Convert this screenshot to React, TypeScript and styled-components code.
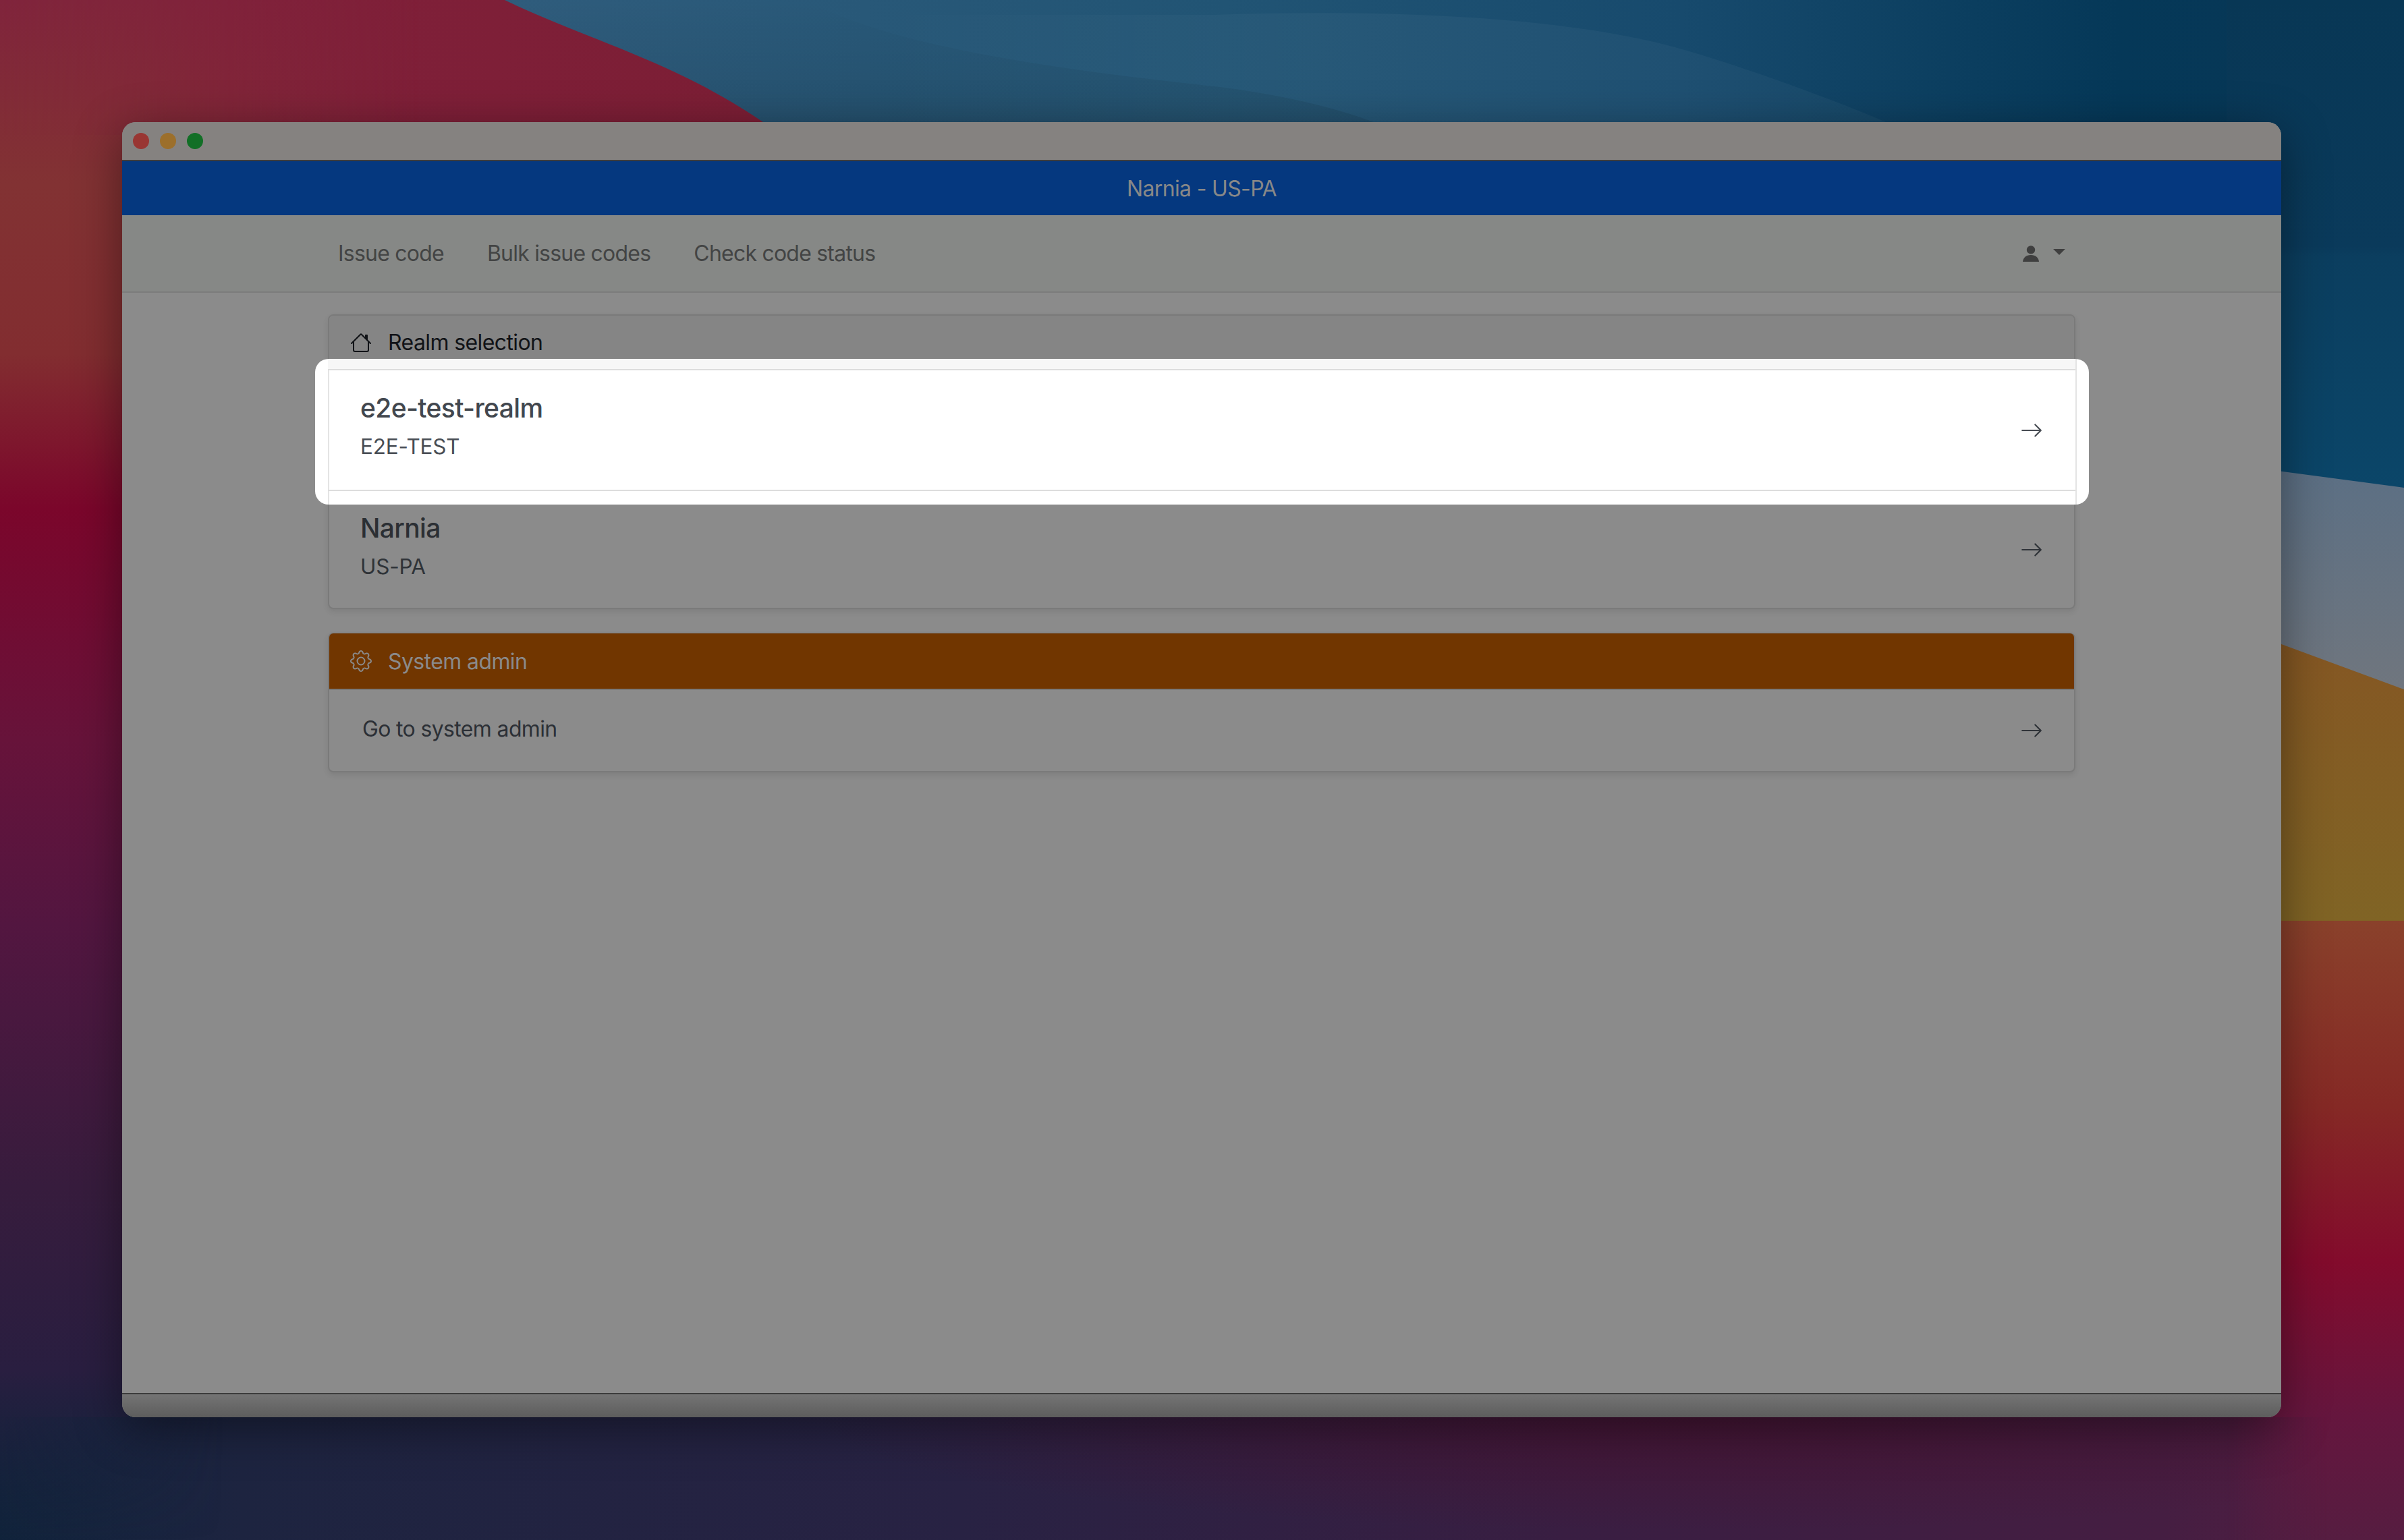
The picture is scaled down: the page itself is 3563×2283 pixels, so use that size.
import React from "react";
import styled, { createGlobalStyle } from "styled-components";
import { BsArrowRight, BsGear, BsHouse } from "react-icons/bs";

const Global = createGlobalStyle`
  html, body { margin: 0; padding: 0; background: #1f1d3a; }
  body { font-family: Inter, "Liberation Sans", sans-serif; }
`;

const Stage = styled.div`
  position: relative;
  width: 3563px;
  height: 2283px;
  overflow: hidden;
  box-sizing: border-box;
  padding: 181px 182px 182px 181px;
`;

const WallpaperSvg = styled.svg`
  position: absolute;
  inset: 0;
`;

const Window = styled.main`
  position: relative;
  height: 100%;
  display: flex;
  flex-direction: column;
  border-radius: 20px;
  overflow: hidden;
  background: #8b8b8b;
  box-shadow: 0 16px 70px rgba(0, 0, 0, 0.42);
`;

const TitleBar = styled.div`
  flex: none;
  height: 56px;
  box-sizing: content-box;
  display: flex;
  align-items: center;
  gap: 16px;
  padding-left: 16px;
  background: #858280;
  border-bottom: 2px solid #3e3d3c;
`;

const Light = styled.span<{ $color: string }>`
  width: 24px;
  height: 24px;
  border-radius: 50%;
  background: ${(p) => p.$color};
`;

const Banner = styled.header`
  flex: none;
  height: 80px;
  display: flex;
  align-items: center;
  justify-content: center;
  background: #05387f;
  color: #888888;
  font-size: 32px;
  letter-spacing: -0.65px;
`;

const NavBar = styled.nav`
  flex: none;
  height: 113px;
  box-sizing: content-box;
  display: flex;
  justify-content: center;
  background: #868886;
  border-bottom: 2px solid #7c7c7c;
`;

const NavInner = styled.div`
  width: 2590px;
  box-sizing: border-box;
  padding: 0 15px;
  display: flex;
  align-items: center;
  gap: 64px;
`;

const NavLink = styled.span`
  font-size: 32px;
  color: #434444;
  letter-spacing: -0.78px;
`;

const UserMenu = styled.div`
  margin-left: auto;
  display: flex;
  align-items: center;
  gap: 21px;
  color: #3f3f3f;
`;

const Caret = styled.span`
  width: 0;
  height: 0;
  margin-bottom: 4px;
  border-top: 9px solid #3f3f3f;
  border-left: 9px solid transparent;
  border-right: 9px solid transparent;
`;

const Content = styled.div`
  flex: 1;
  width: 2590px;
  align-self: center;
  padding-top: 32px;
  display: flex;
  flex-direction: column;
  gap: 35px;
`;

const Card = styled.section`
  position: relative;
  box-sizing: border-box;
  border: 2px solid #7a7a7a;
  border-radius: 8px;
  box-shadow: 0 4px 8px rgba(0, 0, 0, 0.09);
`;

const CardHeader = styled.div<{ $accent?: boolean }>`
  height: ${(p) => (p.$accent ? 82 : 79)}px;
  margin-top: ${(p) => (p.$accent ? -1 : 0)}px;
  box-sizing: content-box;
  display: flex;
  align-items: center;
  gap: 24px;
  padding-left: 31px;
  font-size: 32px;
  letter-spacing: -0.6px;
  background: ${(p) => (p.$accent ? "#713600" : "#858585")};
  color: ${(p) => (p.$accent ? "#8a8a8a" : "#111317")};
  border-bottom: 2px solid #7a7a7a;
  border-radius: 6px 6px 0 0;
`;

const Row = styled.div<{ $highlight?: boolean; $last?: boolean }>`
  position: relative;
  height: ${(p) => (p.$last ? 174 : 178)}px;
  box-sizing: border-box;
  padding: 32px 46px 0 46px;
  display: flex;
  justify-content: space-between;
  ${(p) =>
    p.$highlight
      ? `
    z-index: 1;
    &::before {
      content: "";
      position: absolute;
      z-index: -1;
      top: -17px;
      bottom: -21px;
      left: -21px;
      right: -22px;
      border-radius: 20px;
      background:
        linear-gradient(#dddddd, #dddddd) 19px 15px / calc(100% - 39px) 2px no-repeat,
        linear-gradient(#dddddd, #dddddd) 19px 194px / calc(100% - 39px) 2px no-repeat,
        linear-gradient(#f7f7f7, #f7f7f7) 19px 0 / calc(100% - 39px) 15px no-repeat,
        linear-gradient(#e4e4e4, #e4e4e4) 19px 0 / 2px 100% no-repeat,
        linear-gradient(#e4e4e4, #e4e4e4) right 18px top 0 / 2px 100% no-repeat,
        #ffffff;
    }
  `
      : ""}
`;

const RowText = styled.div`
  display: flex;
  flex-direction: column;
  gap: 9px;
`;

const RowTitle = styled.div<{ $dim?: boolean }>`
  font-size: 39px;
  line-height: 48px;
  font-weight: 550;
  letter-spacing: -0.65px;
  color: ${(p) => (p.$dim ? "#2b2f34" : "#42474e")};
`;

const RowSub = styled.div<{ $dim?: boolean }>`
  font-size: 31.5px;
  line-height: 48px;
  letter-spacing: -0.2px;
  color: ${(p) => (p.$dim ? "#2f3338" : "#484d54")};
`;

const Arrow = styled.span<{ $dim?: boolean; $shift: number }>`
  align-self: center;
  margin-top: ${(p) => p.$shift}px;
  display: flex;
  color: ${(p) => (p.$dim ? "#2f3338" : "#484d54")};
`;

const AdminRow = styled.div`
  height: 120px;
  box-sizing: border-box;
  padding: 0 46px 6px 49px;
  display: flex;
  align-items: center;
  justify-content: space-between;
  font-size: 32px;
  letter-spacing: -0.65px;
  color: #2c3036;
`;

const Footer = styled.footer`
  flex: none;
  height: 34px;
  background: linear-gradient(#747474, #5d5d5d);
  border-top: 2px solid #3c3c3c;
`;

function PersonIcon() {
  return (
    <svg width="24" height="24" viewBox="0 0 24 24" fill="currentColor">
      <circle cx="12" cy="6.4" r="6.2" />
      <path d="M0 24C0.5 18 5 14 12 14C19 14 23.5 18 24 24Z" />
    </svg>
  );
}

function Wallpaper() {
  return (
    <WallpaperSvg width="3563" height="2283" viewBox="0 0 3563 2283">
      <defs>
        <linearGradient id="bottomBand" x1="0" y1="0" x2="1" y2="0">
          <stop offset="0" stopColor="#11233b" />
          <stop offset="0.1" stopColor="#1d2440" />
          <stop offset="0.4" stopColor="#282243" />
          <stop offset="0.65" stopColor="#391e42" />
          <stop offset="0.9" stopColor="#451e42" />
          <stop offset="1" stopColor="#561d41" />
        </linearGradient>
        <radialGradient id="bottomGlow" gradientUnits="userSpaceOnUse" cx="2500" cy="2100" r="1" gradientTransform="translate(2500 2100) scale(1300 170) translate(-2500 -2100)">
          <stop offset="0" stopColor="#4a0f2b" stopOpacity="0.6" />
          <stop offset="1" stopColor="#4a0f2b" stopOpacity="0" />
        </radialGradient>
        <linearGradient id="leftBand" gradientUnits="userSpaceOnUse" x1="0" y1="0" x2="0" y2="2283">
          <stop offset="0" stopColor="#80243c" />
          <stop offset="0.12" stopColor="#823233" />
          <stop offset="0.23" stopColor="#822d30" />
          <stop offset="0.33" stopColor="#7b062b" />
          <stop offset="0.48" stopColor="#67133a" />
          <stop offset="0.6" stopColor="#531640" />
          <stop offset="0.77" stopColor="#371c3d" />
          <stop offset="0.89" stopColor="#291e40" />
          <stop offset="1" stopColor="#13223b" stopOpacity="0" />
        </linearGradient>
        <linearGradient id="redTop" x1="0" y1="0" x2="1" y2="0">
          <stop offset="0" stopColor="#822d38" />
          <stop offset="0.3" stopColor="#80203a" />
          <stop offset="1" stopColor="#7c1e35" />
        </linearGradient>
        <linearGradient id="blueBase" gradientUnits="userSpaceOnUse" x1="748" y1="0" x2="3563" y2="0">
          <stop offset="0" stopColor="#2f5c7c" />
          <stop offset="0.38" stopColor="#215474" />
          <stop offset="0.62" stopColor="#174a6d" />
          <stop offset="0.85" stopColor="#053858" />
          <stop offset="1" stopColor="#083755" />
        </linearGradient>
        <linearGradient id="blueShade" x1="0" y1="0" x2="0" y2="1">
          <stop offset="0" stopColor="#000" stopOpacity="0" />
          <stop offset="1" stopColor="#000" stopOpacity="0.2" />
        </linearGradient>
        <linearGradient id="liftFade" gradientUnits="userSpaceOnUse" x1="1300" y1="0" x2="1950" y2="0">
          <stop offset="0" stopColor="#fff" stopOpacity="0" />
          <stop offset="1" stopColor="#fff" stopOpacity="0.035" />
        </linearGradient>
        <linearGradient id="blueRight" x1="0" y1="0" x2="0" y2="1">
          <stop offset="0" stopColor="#083755" />
          <stop offset="0.5" stopColor="#0a3a5b" />
          <stop offset="0.52" stopColor="#0b3e5f" />
          <stop offset="1" stopColor="#0b4669" />
        </linearGradient>
        <linearGradient id="paleBand" x1="0" y1="0" x2="0" y2="1">
          <stop offset="0" stopColor="#5b6f84" />
          <stop offset="1" stopColor="#70767e" />
        </linearGradient>
        <linearGradient id="orangeBand" x1="0" y1="0" x2="0" y2="1">
          <stop offset="0" stopColor="#855623" />
          <stop offset="1" stopColor="#806425" />
        </linearGradient>
        <linearGradient id="redRight" gradientUnits="userSpaceOnUse" x1="0" y1="1365" x2="0" y2="2283">
          <stop offset="0" stopColor="#8a412b" />
          <stop offset="0.3" stopColor="#852925" />
          <stop offset="0.55" stopColor="#830b2c" />
          <stop offset="0.8" stopColor="#65163e" />
          <stop offset="1" stopColor="#561d41" />
        </linearGradient>
        <linearGradient id="fadeTopLeft" gradientUnits="userSpaceOnUse" x1="0" y1="0" x2="620" y2="0">
          <stop offset="0" stopColor="#fff" />
          <stop offset="1" stopColor="#000" />
        </linearGradient>
        <linearGradient id="fadeBottomLeft" gradientUnits="userSpaceOnUse" x1="0" y1="0" x2="330" y2="0">
          <stop offset="0" stopColor="#fff" />
          <stop offset="1" stopColor="#000" />
        </linearGradient>
        <linearGradient id="fadeBottomRight" gradientUnits="userSpaceOnUse" x1="3300" y1="0" x2="3450" y2="0">
          <stop offset="0" stopColor="#000" />
          <stop offset="1" stopColor="#fff" />
        </linearGradient>
        <mask id="topLeftMask" maskUnits="userSpaceOnUse" x="0" y="0" width="3563" height="2283">
          <rect x="0" y="0" width="3563" height="2283" fill="url(#fadeTopLeft)" />
        </mask>
        <mask id="bottomLeftMask" maskUnits="userSpaceOnUse" x="0" y="0" width="3563" height="2283">
          <rect x="0" y="0" width="3563" height="2283" fill="url(#fadeBottomLeft)" />
        </mask>
        <mask id="bottomRightMask" maskUnits="userSpaceOnUse" x="0" y="0" width="3563" height="2283">
          <rect x="0" y="0" width="3563" height="2283" fill="url(#fadeBottomRight)" />
        </mask>
      </defs>
      <rect x="0" y="1800" width="3563" height="483" fill="url(#bottomBand)" />
      <rect x="0" y="1900" width="3563" height="383" fill="url(#bottomGlow)" />
      <rect x="700" y="0" width="2863" height="400" fill="url(#blueBase)" />
      <path d="M1100 22 L1800 22 C2100 12 2350 30 2500 75 C2600 105 2710 145 2795 181 L2795 400 L1100 400 Z" fill="url(#liftFade)" />
      <path d="M1194 0 C1290 50 1440 90 1800 128 C1900 140 1980 160 2036 181 L2036 400 L700 400 L700 0 Z" fill="url(#blueShade)" />
      <path d="M0 0 L748 0 C830 40 940 75 1033 123 C1070 142 1100 160 1131 181 L1131 400 L0 400 Z" fill="url(#redTop)" />
      <rect x="0" y="0" width="620" height="200" fill="url(#leftBand)" mask="url(#topLeftMask)" />
      <rect x="0" y="200" width="190" height="1901" fill="url(#leftBand)" />
      <rect x="0" y="2101" width="330" height="182" fill="url(#leftBand)" mask="url(#bottomLeftMask)" />
      <rect x="3300" y="0" width="263" height="730" fill="url(#blueRight)" />
      <polygon points="3300,688 3563,723 3563,1030 3300,930" fill="url(#paleBand)" />
      <polygon points="3300,925 3563,1022 3563,1365 3300,1365" fill="url(#orangeBand)" />
      <rect x="3300" y="1365" width="263" height="736" fill="url(#redRight)" />
      <rect x="3300" y="2101" width="263" height="182" fill="url(#redRight)" mask="url(#bottomRightMask)" />
    </WallpaperSvg>
  );
}

export default function App() {
  return (
    <Stage>
      <Global />
      <Wallpaper />
      <Window>
        <TitleBar>
          <Light $color="#993633" />
          <Light $color="#9c6f2b" />
          <Light $color="#126f26" />
        </TitleBar>
        <Banner>Narnia - US-PA</Banner>
        <NavBar>
          <NavInner>
            <NavLink>Issue code</NavLink>
            <NavLink>Bulk issue codes</NavLink>
            <NavLink>Check code status</NavLink>
            <UserMenu>
              <PersonIcon />
              <Caret />
            </UserMenu>
          </NavInner>
        </NavBar>
        <Content>
          <Card>
            <CardHeader>
              <BsHouse size={32} />
              Realm selection
            </CardHeader>
            <Row $highlight>
              <RowText>
                <RowTitle>e2e-test-realm</RowTitle>
                <RowSub>E2E-TEST</RowSub>
              </RowText>
              <Arrow $shift={-32}>
                <BsArrowRight size={34} />
              </Arrow>
            </Row>
            <Row $last>
              <RowText>
                <RowTitle $dim>Narnia</RowTitle>
                <RowSub $dim>US-PA</RowSub>
              </RowText>
              <Arrow $dim $shift={-30}>
                <BsArrowRight size={34} />
              </Arrow>
            </Row>
          </Card>
          <Card>
            <CardHeader $accent>
              <BsGear size={32} />
              System admin
            </CardHeader>
            <AdminRow>
              Go to system admin
              <Arrow $dim $shift={6}>
                <BsArrowRight size={34} />
              </Arrow>
            </AdminRow>
          </Card>
        </Content>
        <Footer />
      </Window>
    </Stage>
  );
}
